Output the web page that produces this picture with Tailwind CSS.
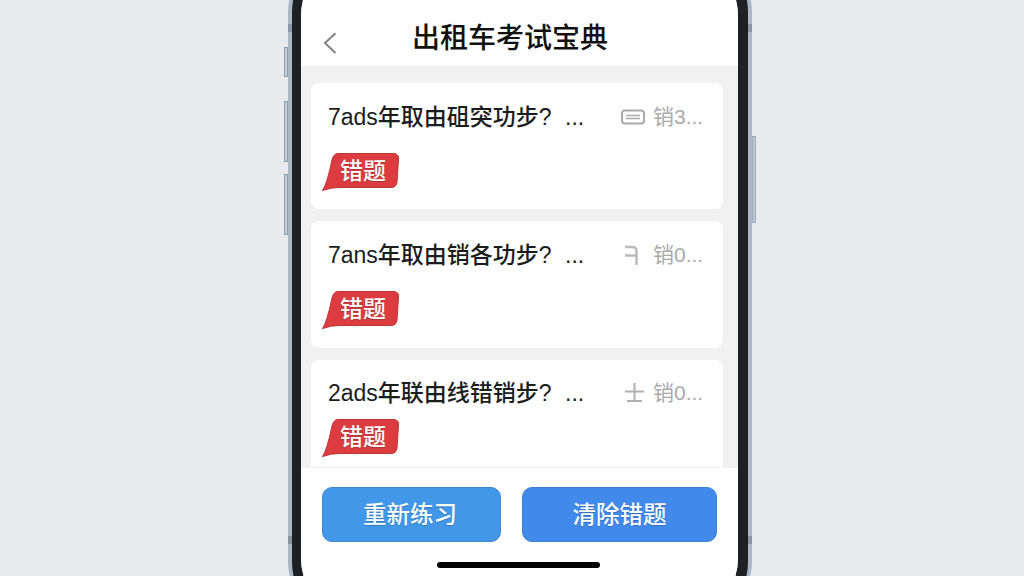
<!DOCTYPE html>
<html lang="zh-CN">
<head>
  <meta charset="UTF-8">
  <meta name="viewport" content="width=device-width, initial-scale=1.0">
  <title>出租车考试宝典</title>
  <script src="https://cdn.jsdelivr.net/npm/@tailwindcss/browser@4"></script>
</head>
<body class="h-screen overflow-hidden bg-[#e8eaed] font-['Liberation_Sans','Noto_Sans_CJK_SC',sans-serif] flex items-start pl-72">

  <!-- phone -->
  <div class="relative -mt-12 h-[670px] w-[464px] shrink-0 rounded-[60px] border-x-4 border-[#a9b7c8] bg-[#1f2023] pl-[9px] pr-[10px]">
    <!-- side buttons and antenna bands -->
    <i class="absolute -left-2 top-[95px] h-[30px] w-1 border border-[#8e9fae] bg-[#c3d0dc]"></i>
    <i class="absolute -left-2 top-[149px] h-[61px] w-1 border border-[#8e9fae] bg-[#c3d0dc]"></i>
    <i class="absolute -left-2 top-[222px] h-[61px] w-1 border border-[#8e9fae] bg-[#c3d0dc]"></i>
    <i class="absolute -right-2 top-[184px] h-[87px] w-1 border border-[#a3adbf] bg-[#bcc5d6]"></i>
    <i class="absolute -left-1 top-[72px] h-2 w-1 bg-[#8798ac]"></i>
    <i class="absolute -right-1 top-[72px] h-2 w-1 bg-[#8c94a6]"></i>
    <i class="absolute -left-1 top-[584px] h-2 w-1 bg-[#8a949f]"></i>
    <i class="absolute -right-1 top-[584px] h-2 w-1 bg-[#8c94a6]"></i>

    <div class="flex h-full flex-col overflow-hidden rounded-[64px] bg-[#f1f1f2]">
      <header class="flex h-[114px] shrink-0 items-center gap-[75px] bg-[#fefefe] pt-[60px] pl-[22px]">
        <svg class="mt-2 h-[22px] w-[14px]" viewBox="0 0 14 22" fill="none" stroke="#858585" stroke-width="2"><path d="M12.5 1.2 2 11l10.5 10"/></svg>
        <h1 class="text-[28px] leading-none font-medium text-[#111]">出租车考试宝典</h1>
      </header>

      <main class="flex h-[402px] shrink-0 flex-col gap-3 overflow-hidden border-b border-[#f0f0f0] pt-[17px] pl-[10px] pr-[15px]">
        <section class="h-[126px] shrink-0 rounded-lg bg-[#fefefe] pt-[18px] pl-[11px]">
          <div class="flex h-8 items-center pl-[6px] text-[23px] leading-8 font-medium text-[#1c1c1c]">
            <span class="w-[237px] whitespace-nowrap">7ads年取由砠突功步?</span>
            <span class="w-[56px]">...</span>
            <svg class="h-4 w-6" viewBox="0 0 24 16" fill="none" stroke="#aaa" stroke-width="2"><rect x="1" y="1.5" width="22" height="13" rx="3"/><path d="M5 6.5h14M5 9.5h14" stroke-width="1.5"/></svg>
            <span class="ml-2 text-[21px] font-normal text-[#aaa]">销3...</span>
          </div>
          <div class="relative mt-5 h-[38px] w-[77px]">
            <svg class="absolute inset-0" width="77" height="38" viewBox="0 0 77 38"><path d="M16 .5H71Q77 .5 76.5 6L75 29Q74.5 34.5 69 34.5H17Q9 34.500 .5 37.500 5 31 10 7 11.5 .5 16 .5Z" fill="#dc3c3f" stroke="#bd3437"/></svg>
            <span class="relative block pl-[18px] text-[23px] leading-[37px] font-medium text-white text-shadow-xs">错题</span>
          </div>
        </section>

        <section class="h-[127px] shrink-0 rounded-lg bg-[#fefefe] pt-[18px] pl-[11px]">
          <div class="flex h-8 items-center pl-[6px] text-[23px] leading-8 font-medium text-[#1c1c1c]">
            <span class="w-[237px] whitespace-nowrap">7ans年取由销各功步?</span>
            <span class="w-[60px]">...</span>
            <svg class="h-5 w-5" viewBox="0 0 20 20" fill="none" stroke="#bbb" stroke-width="2.5"><path d="M0 2h7q4.500 0 4.500 4v14M0 10.500h11"/></svg>
            <span class="ml-2 text-[21px] font-normal text-[#aaa]">销0...</span>
          </div>
          <div class="relative mt-5 h-[38px] w-[77px]">
            <svg class="absolute inset-0" width="77" height="38" viewBox="0 0 77 38"><path d="M16 .5H71Q77 .5 76.5 6L75 29Q74.5 34.5 69 34.5H17Q9 34.500 .5 37.500 5 31 10 7 11.5 .5 16 .5Z" fill="#dc3c3f" stroke="#bd3437"/></svg>
            <span class="relative block pl-[18px] text-[23px] leading-[37px] font-medium text-white text-shadow-xs">错题</span>
          </div>
        </section>

        <section class="h-[127px] shrink-0 rounded-lg bg-[#fefefe] pt-[17px] pl-[11px]">
          <div class="flex h-8 items-center pl-[6px] text-[23px] leading-8 font-medium text-[#1c1c1c]">
            <span class="w-[237px] whitespace-nowrap">2ads年联由线错销步?</span>
            <span class="w-[60px]">...</span>
            <svg class="h-5 w-5" viewBox="0 0 20 20" fill="none" stroke="#b0b0b0" stroke-width="2"><path d="M9.500 0v18M0 8.500h19M2 18h15"/></svg>
            <span class="ml-2 text-[21px] font-normal text-[#aaa]">销0...</span>
          </div>
          <div class="relative mt-[10px] h-[38px] w-[77px]">
            <svg class="absolute inset-0" width="77" height="38" viewBox="0 0 77 38"><path d="M16 .5H71Q77 .5 76.5 6L75 29Q74.5 34.5 69 34.5H17Q9 34.500 .5 37.500 5 31 10 7 11.5 .5 16 .5Z" fill="#dc3c3f" stroke="#bd3437"/></svg>
            <span class="relative block pl-[18px] text-[23px] leading-[37px] font-medium text-white text-shadow-xs">错题</span>
          </div>
        </section>
      </main>

      <footer class="flex grow flex-col items-center bg-[#fefefe] pt-[19px]">
        <div class="flex w-full gap-[21px] pl-[21px] text-[23.5px] font-medium text-white">
          <button class="h-[55px] w-[179px] rounded-[10px] border border-[#4286c9] bg-[#4297e9] pt-[2px] pr-[3px] text-shadow-xs">重新练习</button>
          <button class="h-[55px] w-[195px] rounded-[10px] border border-[#4080d0] bg-[#4289ec] pt-[2px] text-shadow-xs">清除错题</button>
        </div>
        <div class="mt-5 mr-[2px] h-[6px] w-[163px] rounded-full bg-black"></div>
      </footer>
    </div>
  </div>

</body>
</html>
